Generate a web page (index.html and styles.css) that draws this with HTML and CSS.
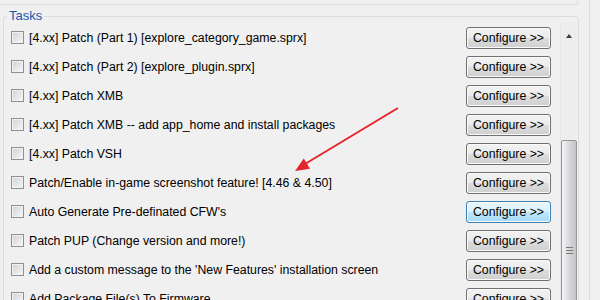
FILE: index.html
```html
<!DOCTYPE html>
<html>
<head>
<meta charset="utf-8">
<link rel="stylesheet" href="styles.css">
</head>
<body>
<div class="outer">
  <div class="prev"></div>
  <fieldset class="tasks">
    <legend class="tasks-title">Tasks</legend>
    <div class="panel">
      <div class="list">
        <div class="row"><span class="cb"></span><span class="label">[4.xx] Patch (Part 1) [explore_category_game.sprx]</span><button class="btn">Configure &gt;&gt;</button></div>
        <div class="row"><span class="cb"></span><span class="label">[4.xx] Patch (Part 2) [explore_plugin.sprx]</span><button class="btn">Configure &gt;&gt;</button></div>
        <div class="row"><span class="cb"></span><span class="label">[4.xx] Patch XMB</span><button class="btn">Configure &gt;&gt;</button></div>
        <div class="row"><span class="cb"></span><span class="label">[4.xx] Patch XMB -- add app_home and install packages</span><button class="btn">Configure &gt;&gt;</button></div>
        <div class="row"><span class="cb"></span><span class="label">[4.xx] Patch VSH</span><button class="btn">Configure &gt;&gt;</button></div>
        <div class="row"><span class="cb"></span><span class="label">Patch/Enable in-game screenshot feature! [4.46 &amp; 4.50]</span><button class="btn">Configure &gt;&gt;</button></div>
        <div class="row"><span class="cb"></span><span class="label">Auto Generate Pre-definated CFW's</span><button class="btn btn-hover">Configure &gt;&gt;</button></div>
        <div class="row"><span class="cb"></span><span class="label">Patch PUP (Change version and more!)</span><button class="btn">Configure &gt;&gt;</button></div>
        <div class="row"><span class="cb"></span><span class="label">Add a custom message to the 'New Features' installation screen</span><button class="btn">Configure &gt;&gt;</button></div>
        <div class="row"><span class="cb"></span><span class="label">Add Package File(s) To Firmware</span><button class="btn">Configure &gt;&gt;</button></div>
      </div>
      <div class="scrollbar">
        <div class="sb-up"><span class="sb-arrow"></span></div>
        <div class="sb-track">
          <div class="sb-thumb"><span class="grip"></span><span class="grip"></span><span class="grip"></span></div>
        </div>
      </div>
    </div>
  </fieldset>
</div>
<svg class="arrow" width="600" height="300" viewBox="0 0 600 300">
  <line x1="398" y1="108" x2="305" y2="164" stroke="#e5242c" stroke-width="2"/>
  <polygon points="295,171 303.8,158.6 310,168.8" fill="#e5242c"/>
</svg>
</body>
</html>
```
FILE: styles.css
```css
html, body {
  margin: 0;
  padding: 0;
  background: #f0f0f0;
  overflow: hidden;
  width: 600px;
  height: 300px;
}
body {
  font-family: "Liberation Sans", Arial, sans-serif;
  font-size: 12px;
  color: #000;
}
.outer {
  width: 589px;
  height: 300px;
  overflow: hidden;
  border-right: 1px solid #dcdcdc;
}
.prev {
  width: 577px;
  height: 4px;
  border-right: 1px solid #d5dfe5;
  border-bottom: 1px solid #d5dfe5;
}
.tasks {
  margin: 4px 0 0 3px;
  padding: 0;
  width: 576px;
  height: 320px;
  border: 1px solid #d5dfe5;
  border-radius: 3px;
  box-sizing: border-box;
  min-width: 0;
}
.tasks-title {
  margin-left: 3px;
  padding: 0 2px;
  color: #2157b0;
  font-size: 13px;
  line-height: 14px;
}
.panel {
  display: flex;
}
.list {
  flex: 1;
  padding: 0 9px 0 7px;
}
.row {
  display: flex;
  align-items: center;
  height: 29px;
}
.cb {
  width: 11px;
  height: 11px;
  border: 1px solid #8e8f8f;
  background: linear-gradient(135deg, #cfd1d4, #f8f8f8);
  box-shadow: inset 0 0 0 1px #f2f2f2;
  flex: none;
}
.label {
  flex: 1;
  margin-left: 5px;
  font-size: 12.3px;
  white-space: nowrap;
}
.btn {
  flex: none;
  width: 85px;
  height: 22px;
  padding: 0;
  font-family: "Liberation Sans", Arial, sans-serif;
  font-size: 12.3px;
  color: #000;
  border: 1px solid #707070;
  border-radius: 3px;
  background: linear-gradient(#f2f2f2 0%, #ebebeb 50%, #dddddd 51%, #cfcfcf 100%);
  box-shadow: inset 0 0 0 1px #fbfbfb;
}
.btn-hover {
  border-color: #3c7fb1;
  background: linear-gradient(#eaf6fd 0%, #d9f0fc 50%, #bee6fd 51%, #a7d9f5 100%);
}
.scrollbar {
  width: 17px;
  margin-right: 1px;
  display: flex;
  flex-direction: column;
  background: #ededed;
  border-left: 1px solid #e6e6e6;
  box-sizing: border-box;
}
.sb-up {
  height: 20px;
  display: flex;
  justify-content: center;
  align-items: flex-end;
  padding-bottom: 5px;
  box-sizing: border-box;
}
.sb-arrow {
  width: 0;
  height: 0;
  border-left: 3px solid transparent;
  border-right: 3px solid transparent;
  border-bottom: 4px solid #3c3c3c;
}
.sb-track {
  flex: 1;
}
.sb-thumb {
  margin-top: 97px;
  height: 220px;
  border: 1px solid #979797;
  border-radius: 2px;
  background: linear-gradient(to right, #f4f4f4 0%, #e2e2e4 35%, #cfcfd4 70%, #c3c3c8 100%);
  display: flex;
  flex-direction: column;
  align-items: center;
  padding-top: 106px;
  box-sizing: border-box;
  gap: 2px;
}
.grip {
  width: 7px;
  height: 1px;
  background: #7a7a7a;
}
.arrow {
  position: absolute;
  left: 0;
  top: 0;
  pointer-events: none;
}
```
